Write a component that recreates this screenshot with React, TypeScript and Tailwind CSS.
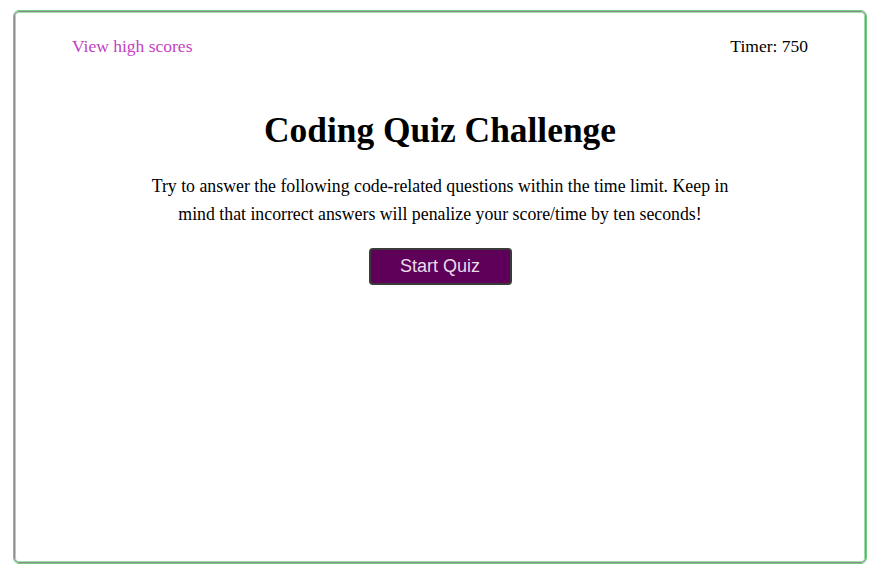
import React from "react";

export default function App() {
  return (
    <div className="w-[883px] h-[584px] bg-white pt-[10px] pl-[13px]" style={{ fontFamily: '"Liberation Serif", "Times New Roman", serif' }}>
      <div className="w-[854px] h-[554px] rounded-[6px] border border-[#74cf82] bg-white">
        <div className="h-full rounded-[5px] border border-[#8a8a8a] shadow-[inset_0_0_0_1px_#a6dfae]">
          <header className="flex justify-between items-center pl-[57px] pr-[57px] pt-[22px]">
            <a className="text-[17.5px] text-[#c23fc0] leading-[24px] cursor-pointer">View high scores</a>
            <span className="text-[17.5px] text-black leading-[24px]">Timer: 750</span>
          </header>
          <main className="flex flex-col items-center mt-[48px]">
            <h1 className="text-[35.4px] font-bold leading-[48px] text-black">Coding Quiz Challenge</h1>
            <p className="mt-[18px] w-[600px] text-center text-[17.8px] leading-[28px] text-black">
              Try to answer the following code-related questions within the time limit. Keep in mind that incorrect answers will penalize your score/time by ten seconds!
            </p>
            <button
              className="mt-[20px] w-[143px] h-[37px] rounded-[4px] border-2 border-[#3a3a3a] bg-[#5e0059] text-[#e8dde8] text-[18px]"
              style={{ fontFamily: '"Liberation Sans", Arial, sans-serif' }}
            >
              Start Quiz
            </button>
          </main>
        </div>
      </div>
    </div>
  );
}
